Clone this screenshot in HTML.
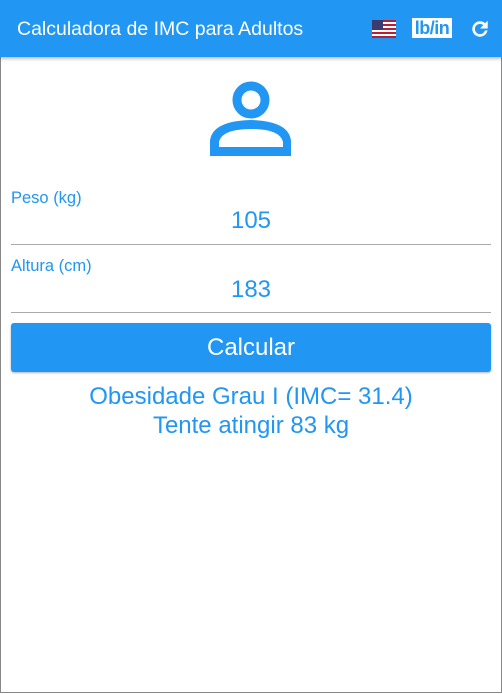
<!DOCTYPE html>
<html><head><meta charset="utf-8"><style>
body{margin:0;width:502px;height:694px;overflow:hidden;background:#fff;font-family:"Liberation Sans",sans-serif;}
.frame{position:absolute;left:0;top:0;width:500px;height:692px;border:1px solid #888;border-top:none;}
.hdr{position:absolute;left:0;top:0;width:502px;height:57px;background:#2196F3;box-shadow:0 2px 3px rgba(0,0,0,.25);}
.title{position:absolute;left:17px;top:18px;color:#fff;font-size:19.5px;}
.lbin{position:absolute;left:412px;top:18px;width:40px;height:20px;background:#fff;color:#2196F3;font-size:18px;font-weight:bold;line-height:20px;text-align:center;letter-spacing:-0.5px;}
.lbl{position:absolute;left:11px;color:#2196F3;font-size:16.5px;}
.val{position:absolute;left:0;width:502px;text-align:center;color:#2196F3;font-size:24px;}
.line{position:absolute;left:11px;width:480px;height:1px;background:#aaa;}
.btn{position:absolute;left:11px;top:323px;width:480px;height:49px;background:#2196F3;border-radius:3px;color:#fff;font-size:24px;line-height:49px;text-align:center;box-shadow:0 1px 2px rgba(0,0,0,.3);}
</style></head><body>
<div class="frame"></div>
<div class="hdr">
<div class="title">Calculadora de IMC para Adultos</div>
<svg style="position:absolute;left:372px;top:20px" width="24" height="18" viewBox="0 0 24 18">
<rect width="24" height="18" fill="#fff"/>
<g fill="#b22234"><rect y="0" width="24" height="2"/><rect y="4" width="24" height="2"/><rect y="8" width="24" height="2"/><rect y="12" width="24" height="2"/><rect y="16" width="24" height="2"/></g>
<rect width="11" height="10" fill="#3c3b6e"/></svg>
<div class="lbin">lb/in</div>
<svg style="position:absolute;left:469px;top:18px" width="22" height="22" viewBox="0 0 24 24"><path fill="#fff" stroke="#fff" stroke-width="0.8" d="M17.65 6.35A7.96 7.96 0 0 0 12 4a8 8 0 1 0 7.73 10h-2.08A6 6 0 1 1 12 6c1.66 0 3.14.69 4.22 1.78L13 11h7V4l-2.35 2.35z"/></svg>
</div>
<svg style="position:absolute;left:0;top:0" width="502" height="200">
<circle cx="251" cy="100" r="14" fill="none" stroke="#2196F3" stroke-width="9"/>
<path fill="#2196F3" fill-rule="evenodd" d="M210 156V141Q212 121 251 120Q289 121 291 141V156ZM219 147V142Q222 129 251 129Q280 129 283 142V147Z"/>
</svg>
<div class="lbl" style="top:189px">Peso (kg)</div>
<div class="val" style="top:207px">105</div>
<div class="line" style="top:244px"></div>
<div class="lbl" style="top:257px">Altura (cm)</div>
<div class="val" style="top:276px">183</div>
<div class="line" style="top:312px"></div>
<div class="btn">Calcular</div>
<div class="val" style="top:383px">Obesidade Grau I (IMC= 31.4)</div>
<div class="val" style="top:412px">Tente atingir 83 kg</div>
</body></html>
